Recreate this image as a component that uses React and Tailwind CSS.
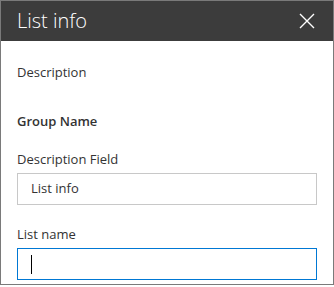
const Field = ({ label, value, focused, className }) => (
  <div className={className}>
    <div className="text-[13px] leading-[20px] text-[#333333]">{label}</div>
    <div
      className={`mt-[4px] h-[32px] w-full border flex items-center pl-[13px] text-[13px] text-[#333333] ${
        focused ? "border-[#0078d4]" : "border-[#c8c8c8]"
      }`}
    >
      {focused ? <span className="block w-px h-[19px] bg-black" /> : value}
    </div>
  </div>
);

const App = () => {
  return (
    <div
      className="w-[334px] h-[285px] border border-[#7a7a7a] bg-white"
      style={{ fontFamily: '"Segoe UI", "Open Sans", sans-serif' }}
    >
      <div className="h-[40px] bg-[#3c3c3c] flex items-center justify-between pl-[16px] pr-[18px]">
        <span className="text-white text-[20px] font-light leading-none">List info</span>
        <svg width="16" height="16" viewBox="0 0 16 16" className="text-white">
          <path d="M1 1 L15 15 M15 1 L1 15" stroke="currentColor" strokeWidth="1.4" fill="none" />
        </svg>
      </div>

      <div className="px-[16px]">
        <div className="mt-[21px] text-[13px] leading-[20px] text-[#333333]">Description</div>
        <div className="mt-[29px] text-[13px] leading-[20px] font-semibold text-[#333333]">Group Name</div>
        <Field className="mt-[18px]" label="Description Field" value="List info" />
        <Field className="mt-[19px]" label="List name" focused />
      </div>
    </div>
  );
};

export default App;
